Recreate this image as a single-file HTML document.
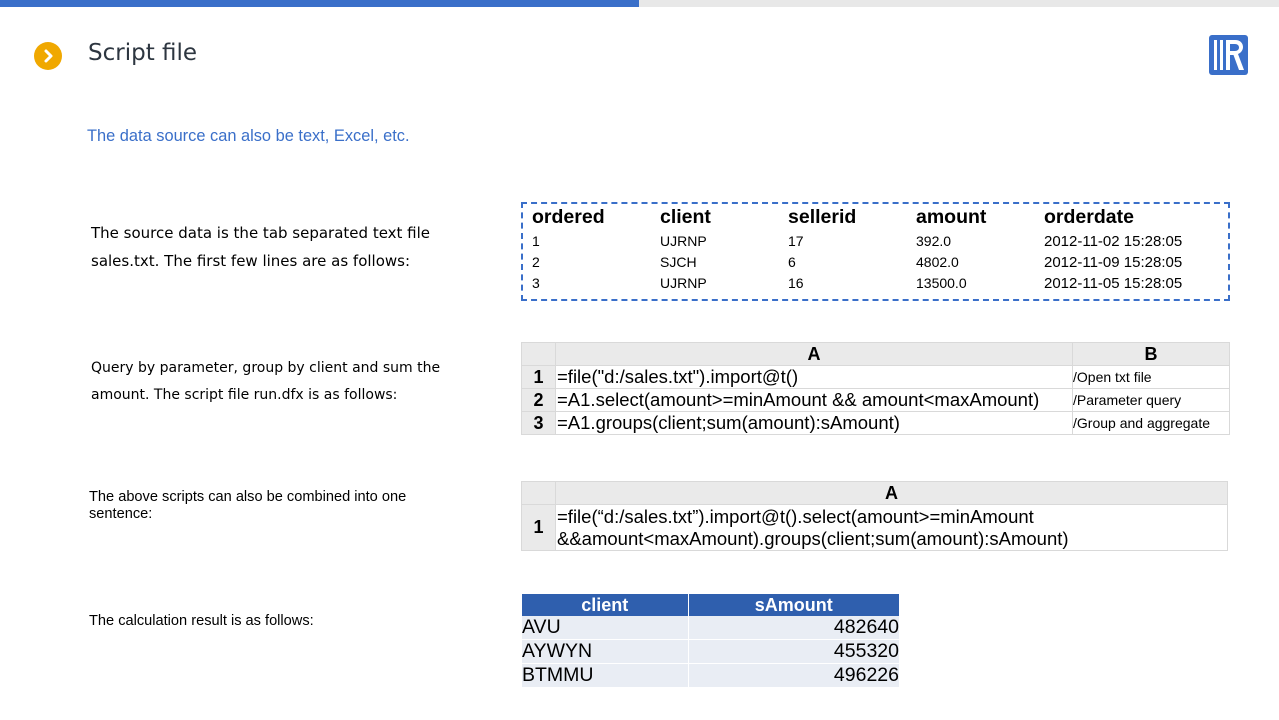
<!DOCTYPE html>
<html><head><meta charset="utf-8"><style>
*{margin:0;padding:0;box-sizing:border-box}
body{width:1279px;height:720px;position:relative;background:#fff;font-family:"Liberation Sans",sans-serif;overflow:hidden}
.abs{position:absolute}
.t{font-size:14px;color:#000;line-height:24px}
table{border-collapse:collapse;position:absolute}
.g td{border:1px solid #d9d9d9;font-size:18.5px;height:23px;white-space:nowrap;padding:0 1px}
.g .h{background:#eaeaea;font-weight:bold;text-align:center;font-size:18px}
.g .n{background:#eaeaea;font-weight:bold;text-align:center;width:34px;font-size:18px}
.g .c{font-size:14px;padding-left:0}
</style></head><body>
<div class="abs" style="left:0;top:0;width:639px;height:7px;background:#3a6fc9"></div>
<div class="abs" style="left:639px;top:0;width:640px;height:7px;background:#e8e8e8"></div>
<div class="abs" style="left:34px;top:42px;width:28px;height:28px;border-radius:50%;background:#f0a800"></div>
<svg class="abs" style="left:34px;top:42px" width="28" height="28"><path d="M12 9l5 5-5 5" stroke="#fff" stroke-width="3" fill="none" stroke-linecap="round" stroke-linejoin="round"/></svg>
<div class="abs" style="left:88px;top:40px;font-size:23px;color:#2d3640;font-family:'DejaVu Sans',sans-serif">Script file</div>
<svg class="abs" style="left:1209px;top:35px" width="39" height="40"><rect width="39" height="40" rx="3" fill="#3a6fc9"/><rect x="5" y="5" width="3" height="30" fill="#fff"/><rect x="11" y="5" width="3" height="30" fill="#fff"/><path fill-rule="evenodd" d="M17 5H26C32 5 34 9 34 12C34 15 32 18 29 19L35 35H30L24.5 20H21V35H17Z M21 9H26C28.5 9 30 10.5 30 12.5C30 14.5 28.5 16 26 16H21Z" fill="#fff"/></svg>
<div class="abs" style="left:87px;top:127px;font-size:16.4px;color:#3a6fc9">The data source can also be text, Excel, etc.</div>
<div class="abs t" style="left:91px;top:219px;line-height:28px;font-family:'DejaVu Sans',sans-serif;font-size:15px">The source data is the tab separated text file<br>sales.txt. The first few lines are as follows:</div>
<div class="abs" style="left:521px;top:202px;width:709px;height:99px;border:2px dashed #3a6fc9"></div>
<div class="abs" style="left:532px;top:206px;font-size:19.5px;font-weight:bold;width:690px">
<span class="abs" style="left:0">ordered</span><span class="abs" style="left:128px">client</span><span class="abs" style="left:256px">sellerid</span><span class="abs" style="left:384px">amount</span><span class="abs" style="left:512px">orderdate</span></div>
<div class="abs" style="left:532px;top:231px;font-size:14px;line-height:21px;width:690px">
<div style="position:relative;height:21px"><span class="abs">1</span><span class="abs" style="left:128px">UJRNP</span><span class="abs" style="left:256px">17</span><span class="abs" style="left:384px">392.0</span><span class="abs" style="left:512px;font-size:15px">2012-11-02 15:28:05</span></div>
<div style="position:relative;height:21px"><span class="abs">2</span><span class="abs" style="left:128px">SJCH</span><span class="abs" style="left:256px">6</span><span class="abs" style="left:384px">4802.0</span><span class="abs" style="left:512px;font-size:15px">2012-11-09 15:28:05</span></div>
<div style="position:relative;height:21px"><span class="abs">3</span><span class="abs" style="left:128px">UJRNP</span><span class="abs" style="left:256px">16</span><span class="abs" style="left:384px">13500.0</span><span class="abs" style="left:512px;font-size:15px">2012-11-05 15:28:05</span></div></div>
<div class="abs t" style="left:91px;top:355px;font-family:'DejaVu Sans',sans-serif;font-size:14px;line-height:27px">Query by parameter, group by client and sum the<br>amount. The script file run.dfx is as follows:</div>
<table class="g" style="left:521px;top:342px;width:709px">
<tr><td class="n"></td><td class="h" style="width:517px">A</td><td class="h">B</td></tr>
<tr><td class="n">1</td><td>=file("d:/sales.txt").import@t()</td><td class="c">/Open txt file</td></tr>
<tr><td class="n">2</td><td>=A1.select(amount&gt;=minAmount &amp;&amp; amount&lt;maxAmount)</td><td class="c">/Parameter query</td></tr>
<tr><td class="n">3</td><td>=A1.groups(client;sum(amount):sAmount)</td><td class="c">/Group and aggregate</td></tr></table>
<div class="abs t" style="left:89px;top:489px;font-size:14.6px;line-height:17px">The above scripts can also be combined into one<br>sentence:</div>
<table class="g" style="left:521px;top:481px;width:707px">
<tr><td class="n"></td><td class="h">A</td></tr>
<tr><td class="n" style="height:46px">1</td><td style="line-height:22px">=file(“d:/sales.txt”).import@t().select(amount&gt;=minAmount<br>&amp;&amp;amount&lt;maxAmount).groups(client;sum(amount):sAmount)</td></tr></table>
<div class="abs t" style="left:89px;top:609px;font-size:14.6px">The calculation result is as follows:</div>
<table style="left:522px;top:594px;width:377px;font-size:19.5px">
<tr style="background:#2f5fae;color:#fff;font-weight:bold;height:22px"><td style="text-align:center;width:166px;border-right:1px solid #fff;font-size:18px">client</td><td style="text-align:center;font-size:18px">sAmount</td></tr>
<tr style="background:#e9edf4;height:23px"><td style="border-right:1px solid #fff">AVU</td><td style="text-align:right">482640</td></tr>
<tr style="background:#e9edf4;height:23px;border-top:1px solid #fff"><td style="border-right:1px solid #fff">AYWYN</td><td style="text-align:right">455320</td></tr>
<tr style="background:#e9edf4;height:23px;border-top:1px solid #fff"><td style="border-right:1px solid #fff">BTMMU</td><td style="text-align:right">496226</td></tr></table>
</body></html>
